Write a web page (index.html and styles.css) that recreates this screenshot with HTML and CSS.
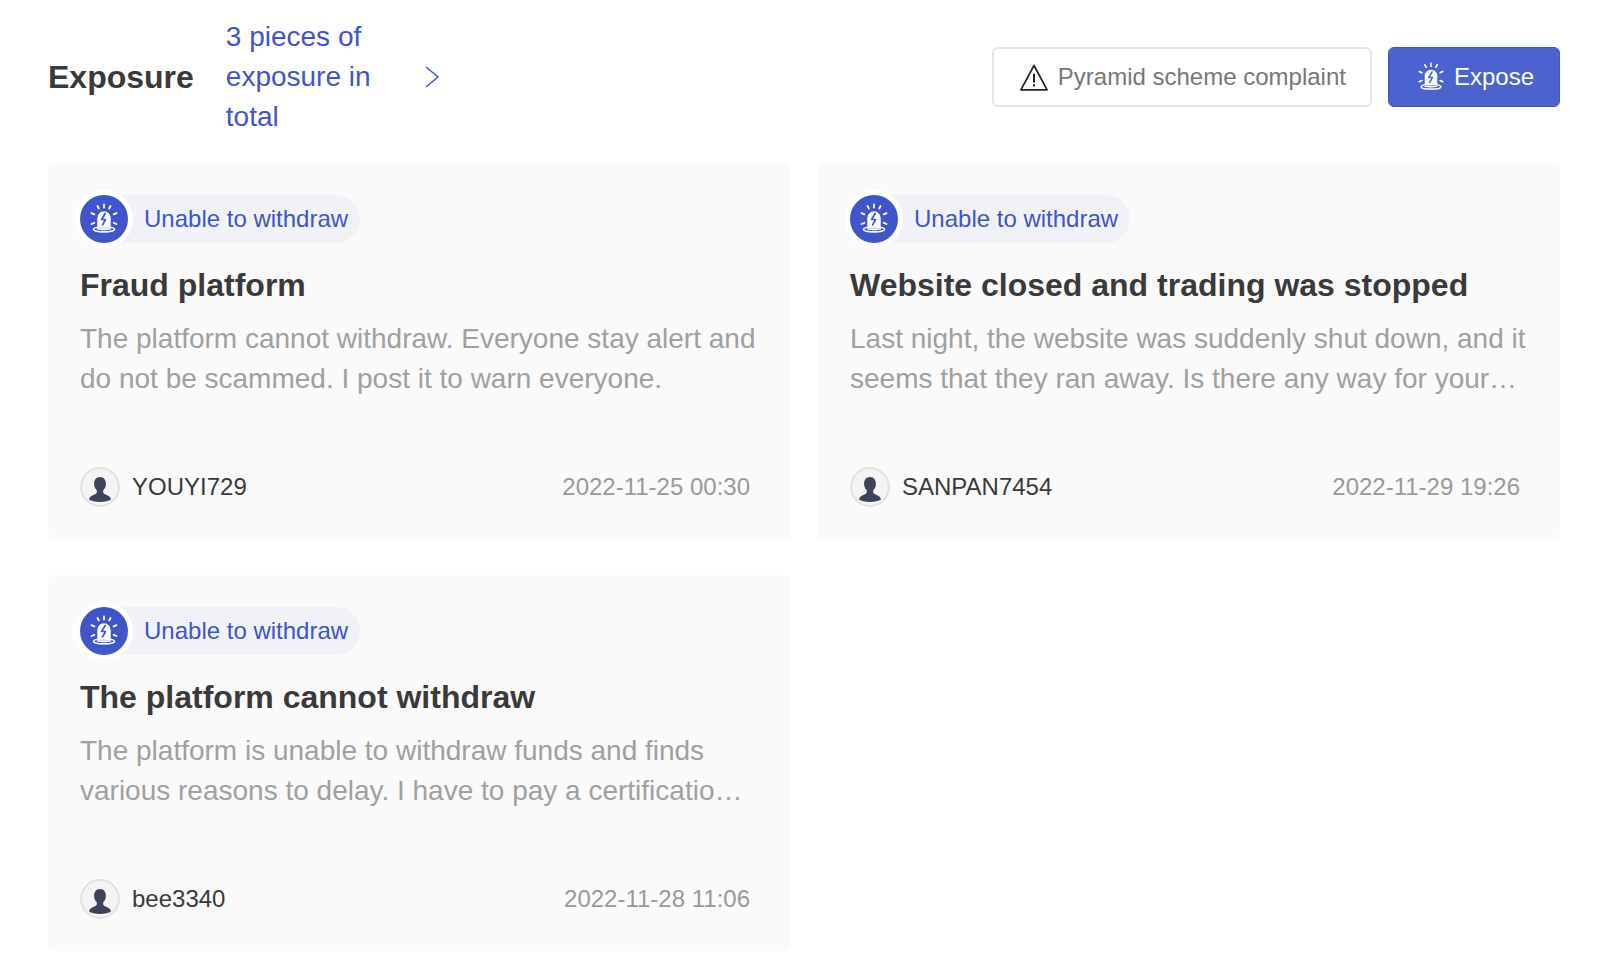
FILE: index.html
```html
<!DOCTYPE html>
<html lang="en">
<head>
<meta charset="utf-8">
<title>Exposure</title>
<link rel="stylesheet" href="styles.css">
</head>
<body>
<svg class="defs" width="0" height="0" aria-hidden="true">
  <defs>
    <symbol id="alarm" viewBox="0 0 32 32">
      <path d="M9.300 24.500V15a6.700 6.700 0 0 1 13.400 0V24.500z" fill="currentColor"/>
      <path d="M17.200 10.500l-3.600 6h3.900L14.600 21.800" fill="none" stroke="var(--bolt)" stroke-width="1.700" stroke-linecap="round" stroke-linejoin="round"/>
      <path d="M16 1.500v3M9.500 3l1.300 2.500M22.500 3l-1.300 2.500M3.500 10.200l2.800 1.200M28.500 10.200l-2.800 1.200M3.500 21l2.800-1.200M28.500 21l-2.800-1.200" fill="none" stroke="currentColor" stroke-width="1.800" stroke-linecap="round"/>
      <path d="M5.500 26.300c0-1.500 3.500-2.300 10.500-2.300s10.500.8 10.500 2.300-3.500 2.600-10.500 2.600-10.500-1.100-10.500-2.600z" fill="var(--bolt)" stroke="currentColor" stroke-width="1.600"/>
      <path d="M9 25.200h14v1.300c-4 1-10 1-14 0z" fill="currentColor"/>
    </symbol>
    <symbol id="user" viewBox="0 0 40 40">
      <circle cx="20" cy="20" r="18.900" fill="#f4f4f5" stroke="#e2e2e2" stroke-width="2"/>
      <path d="M20 10c3.800 0 5.900 2.900 5.900 6.700 0 2.700-1 5.200-2.700 6.600v1.900c0 1.100 1.200 1.800 3.400 2.800 2.500 1.100 4 2.300 4.400 4.600-2 1.500-6.400 2.400-11 2.400s-9-.9-11-2.400c.4-2.300 1.900-3.500 4.400-4.600 2.200-1 3.400-1.700 3.400-2.800v-1.900c-1.700-1.400-2.700-3.900-2.700-6.600 0-3.800 2.100-6.700 5.900-6.700z" fill="#3d4459"/>
    </symbol>
  </defs>
</svg>
<main class="page">
  <header class="head">
    <h1 class="title">Exposure</h1>
    <a class="total">
      <span class="total-text">3 pieces of exposure in total</span>
      <svg class="chev" viewBox="0 0 16 24" aria-hidden="true"><path d="M2 2l12 10L2 22" fill="none" stroke="#3f55c9" stroke-width="1.500"/></svg>
    </a>
    <div class="actions">
      <button class="btn btn-plain">
        <svg class="warn" viewBox="0 0 28 27" aria-hidden="true"><path d="M14 1.500L.9 25.800h26.200z" fill="none" stroke="#222" stroke-width="1.700" stroke-linejoin="round"/><path d="M14 9.800v8.700M14 20.200v2.300" fill="none" stroke="#222" stroke-width="2"/></svg>
        Pyramid scheme complaint
      </button>
      <button class="btn btn-primary">
        <svg class="btn-alarm" aria-hidden="true"><use href="#alarm"/></svg>
        Expose
      </button>
    </div>
  </header>
  <section class="grid">
    <article class="card">
      <div class="tag"><span class="tag-icon"><svg class="tag-alarm" aria-hidden="true"><use href="#alarm"/></svg></span><span class="tag-text">Unable to withdraw</span></div>
      <h2 class="card-title">Fraud platform</h2>
      <p class="card-body">The platform cannot withdraw. Everyone stay alert and do not be scammed. I post it to warn everyone.</p>
      <div class="meta"><svg class="avatar" aria-hidden="true"><use href="#user"/></svg><span class="name">YOUYI729</span><time class="date">2022-11-25 00:30</time></div>
    </article>
    <article class="card">
      <div class="tag"><span class="tag-icon"><svg class="tag-alarm" aria-hidden="true"><use href="#alarm"/></svg></span><span class="tag-text">Unable to withdraw</span></div>
      <h2 class="card-title">Website closed and trading was stopped</h2>
      <p class="card-body">Last night, the website was suddenly shut down, and it seems that they ran away. Is there any way for your platform to help us get our money back from them?</p>
      <div class="meta"><svg class="avatar" aria-hidden="true"><use href="#user"/></svg><span class="name">SANPAN7454</span><time class="date">2022-11-29 19:26</time></div>
    </article>
    <article class="card">
      <div class="tag"><span class="tag-icon"><svg class="tag-alarm" aria-hidden="true"><use href="#alarm"/></svg></span><span class="tag-text">Unable to withdraw</span></div>
      <h2 class="card-title">The platform cannot withdraw</h2>
      <p class="card-body">The platform is unable to withdraw funds and finds various reasons to delay. I have to pay a certification fee before I can get any of my money out of it.</p>
      <div class="meta"><svg class="avatar" aria-hidden="true"><use href="#user"/></svg><span class="name">bee3340</span><time class="date">2022-11-28 11:06</time></div>
    </article>
  </section>
</main>
</body>
</html>
```
FILE: styles.css
```css
* { box-sizing: border-box; }
html, body { margin: 0; background: #fff; }
body { font-family: "Liberation Sans", Arial, sans-serif; color: #3a3a3a; overflow: hidden; }
.defs { position: absolute; }
.page { padding: 17px 43px 0 48px; }
.head { display: flex; align-items: center; height: 120px; margin-bottom: 26px; }
.title { margin: 0; font-size: 32px; font-weight: 700; line-height: 40px; color: #3a3a3a; }
.total { display: flex; align-items: center; margin-left: 32px; color: #3f55c9; font-size: 28px; line-height: 40px; }
.total-text { width: 198px; }
.chev { width: 16px; height: 24px; }
.actions { display: flex; gap: 16px; margin-left: auto; }
.btn { display: flex; align-items: center; height: 60px; border-radius: 6px; font: 24px/1 "Liberation Sans", Arial, sans-serif; cursor: pointer; }
.btn-plain { padding: 0 24px 0 26px; gap: 10px; background: #fff; border: 2px solid #e5e5e5; color: #777; }
.btn-primary { padding: 0 25px 0 27px; gap: 8px; background: #4c63cf; border: 1px solid #3f55c9; color: #fff; --bolt: #4c63cf; }
.warn { width: 28px; height: 27px; }
.btn-alarm { width: 30px; height: 30px; }
.grid { display: grid; grid-template-columns: 742px 742px; gap: 36px 28px; }
.card { height: 376px; padding: 32px; background: #fafafa; border-radius: 6px; display: flex; flex-direction: column; }
.tag { display: flex; align-items: center; align-self: flex-start; height: 48px; background: #f1f2f8; border-radius: 24px; padding-right: 12px; }
.tag-icon { display: flex; align-items: center; justify-content: center; width: 48px; height: 48px; border-radius: 50%; background: #3f55c9; color: #fff; --bolt: #3f55c9; box-shadow: 0 0 0 5px #fff; margin-right: 16px; }
.tag-alarm { width: 32px; height: 32px; }
.tag-text { font-size: 24px; color: #3f55c9; }
.card-title { margin: 22px 0 0; font-size: 32px; line-height: 40px; font-weight: 700; color: #3a3a3a; }
.card-body { margin: 14px 0 0; font-size: 28px; line-height: 40px; height: 80px; color: #a0a0a0; display: -webkit-box; -webkit-box-orient: vertical; -webkit-line-clamp: 2; overflow: hidden; }
.meta { display: flex; align-items: center; margin-top: auto; height: 40px; padding-right: 8px; }
.avatar { width: 40px; height: 40px; margin-right: 12px; }
.name { font-size: 24px; color: #3a3a3a; }
.date { margin-left: auto; font-size: 24px; color: #999; }
```
